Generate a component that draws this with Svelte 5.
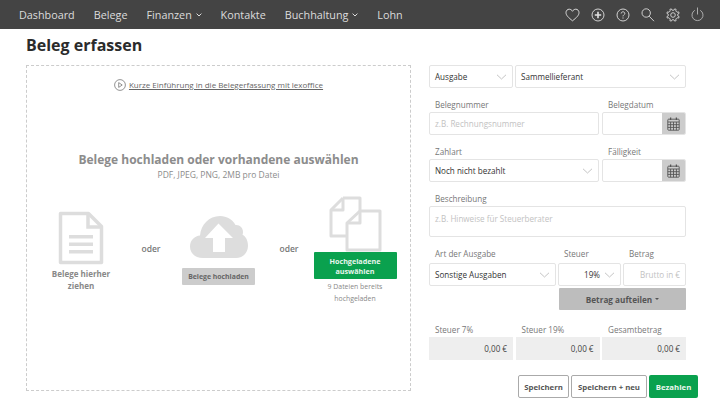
<script>
  const navItems = [
    { label: "Dashboard" },
    { label: "Belege" },
    { label: "Finanzen", caret: true },
    { label: "Kontakte" },
    { label: "Buchhaltung", caret: true },
    { label: "Lohn" }
  ];
  const totals = [
    { label: "Steuer 7%", value: "0,00 €" },
    { label: "Steuer 19%", value: "0,00 €" },
    { label: "Gesamtbetrag", value: "0,00 €" }
  ];

  // eight-toothed outline for the settings icon
  const gear = Array.from({ length: 8 }, (_, i) => {
    const a = (i * Math.PI) / 4 - Math.PI / 8;
    const pts = [[-0.2, 4.9], [-0.12, 6.4], [0.12, 6.4], [0.2, 4.9]];
    return pts
      .map(([d, r]) => `${(7 + r * Math.cos(a + d)).toFixed(2)},${(7 + r * Math.sin(a + d)).toFixed(2)}`)
      .join(" ");
  }).join(" ");
</script>

{#snippet chevron()}
  <svg class="chev" width="11" height="6" viewBox="0 0 11 6"><path d="M1 .8l4.5 4.2L10 .8" fill="none" stroke="#c4c4c4" stroke-width="1"/></svg>
{/snippet}

{#snippet calendar()}
  <span class="cal">
    <svg width="13" height="14" viewBox="0 0 13 14" fill="none" stroke="#555" stroke-width=".9">
      <rect x=".8" y="2.2" width="11.4" height="11" rx=".8"/>
      <path d="M.8 5h11.4M.8 7.7h11.4M.8 10.4h11.4M3.6 5v8.2M6.5 5v8.2M9.4 5v8.2"/>
      <path d="M3.6.5v2.6M9.4.5v2.6" stroke-width="1.3"/>
    </svg>
  </span>
{/snippet}

<header class="nav">
  <nav class="links">
    {#each navItems as item}
      <span class="link">
        {item.label}
        {#if item.caret}
          <svg width="6" height="4" viewBox="0 0 6 4"><path d="M.6.6L3 3l2.4-2.4" fill="none" stroke="#ddd" stroke-width="1"/></svg>
        {/if}
      </span>
    {/each}
  </nav>
  <div class="icons">
    <svg width="15" height="14" viewBox="0 0 15 14" fill="none" stroke="#e8e8e8" stroke-width=".9"><path d="M7.5 12.8C3.5 9.6 1 7.4 1 4.6 1 2.600 2.500 1.200 4.200 1.200c1.400 0 2.600.8 3.300 2.100.7-1.300 1.900-2.100 3.300-2.100 1.700 0 3.200 1.400 3.200 3.400 0 2.800-2.500 5-6.500 8.200z"/></svg>
    <svg width="14" height="14" viewBox="0 0 14 14" fill="none" stroke="#e0e0e0"><circle cx="7" cy="7" r="6" stroke-width=".9"/><path d="M7 3.800v6.400M3.800 7h6.400" stroke-width="1.600"/></svg>
    <svg width="14" height="14" viewBox="0 0 14 14" fill="none" stroke="#e0e0e0" stroke-width=".9"><circle cx="7" cy="7" r="6"/><path d="M5.200 5.500c0-1 .8-1.700 1.800-1.700s1.800.7 1.800 1.600c0 1.400-1.800 1.400-1.800 3"/><path d="M7 9.400v1.200"/></svg>
    <svg width="14" height="14" viewBox="0 0 14 14" fill="none" stroke="#dcdcdc" stroke-width=".9"><circle cx="5.200" cy="5" r="4.200"/><path d="M8.200 8.200l4.800 5"/></svg>
    <svg width="14" height="14" viewBox="0 0 14 14" fill="none" stroke="#d8d8d8" stroke-width=".9"><circle cx="7" cy="7" r="2.300"/><polygon points={gear} stroke-linejoin="round"/></svg>
    <svg width="13" height="15" viewBox="0 0 13 15" fill="none" stroke="#b8b8b8" stroke-width=".9"><path d="M6.500 .5v7"/><path d="M3.800 3.300a5.500 5.500 0 1 0 5.400 0"/></svg>
  </div>
</header>

<main class="page">
  <h1>Beleg erfassen</h1>
  <div class="columns">
    <section class="drop">
      <div class="intro">
        <svg width="12" height="12" viewBox="0 0 12 12" fill="none" stroke="#777" stroke-width=".8"><circle cx="6" cy="6" r="5.400"/><path d="M4.700 3.600L8.200 6 4.700 8.400z"/></svg>
        <span>Kurze Einführung in die Belegerfassung mit lexoffice</span>
      </div>
      <h2>Belege hochladen oder vorhandene auswählen</h2>
      <p class="formats">PDF, JPEG, PNG, 2MB pro Datei</p>
      <div class="options">
        <div class="opt first">
          <svg width="46" height="54" viewBox="0 0 46 54">
            <path d="M2.500 2.500h28l13 13v36h-41z" fill="none" stroke="#ddd" stroke-width="3.500" stroke-linejoin="round"/>
            <path d="M30 3v13h13" fill="none" stroke="#ddd" stroke-width="3.500"/>
            <path d="M11 24h24v3.500H11zM11 31.500h24V35H11zM11 39h24v3.500H11z" fill="#ddd"/>
          </svg>
          <strong>Belege hierher<br />ziehen</strong>
        </div>
        <span class="or">oder</span>
        <div class="opt second">
          <svg width="58" height="43" viewBox="0 0 58 43">
            <path d="M13 42C5 42 0 37 0 30.500 0 24 5 20 10 19.500 11 8.500 19 0 30 0c7 0 12.500 3.500 15.500 9 4-.5 7.500 2.500 7.500 7 0 1-.2 2-.5 2.800C56 20.500 58 25 58 30c0 7-5.500 12-12 12z" fill="#ddd"/>
            <path d="M28.500 7.500L43 22h-8v14H23V22h-8z" fill="#fff"/>
          </svg>
          <span class="btn-grey">Belege hochladen</span>
        </div>
        <span class="or">oder</span>
        <div class="opt third">
          <svg width="53" height="56" viewBox="0 0 53 56" fill="none" stroke="#ddd" stroke-width="3" stroke-linejoin="round">
            <path d="M14 2h17v17M14 2L2 14v26h15"/>
            <path d="M2 14h12V2"/>
            <path d="M31 15h20v39H24.500 18V27z" fill="#fff"/>
            <path d="M18 27h13V15"/>
          </svg>
          <span class="btn-green">Hochgeladene<br />auswählen</span>
          <small>9 Dateien bereits<br />hochgeladen</small>
        </div>
      </div>
    </section>

    <section class="form">
      <div class="row r-type">
        <div class="field select"><span>Ausgabe</span>{@render chevron()}</div>
        <div class="field select"><span>Sammellieferant</span>{@render chevron()}</div>
      </div>

      <div class="row r-two gap-top">
        <div>
          <span class="label">Belegnummer</span>
          <div class="field ph">z.B. Rechnungsnummer</div>
        </div>
        <div>
          <span class="label">Belegdatum</span>
          <div class="field date">{@render calendar()}</div>
        </div>
      </div>

      <div class="row r-two gap-top">
        <div>
          <span class="label">Zahlart</span>
          <div class="field select"><span>Noch nicht bezahlt</span>{@render chevron()}</div>
        </div>
        <div>
          <span class="label">Fälligkeit</span>
          <div class="field date">{@render calendar()}</div>
        </div>
      </div>

      <div class="gap-top">
        <span class="label">Beschreibung</span>
        <div class="field ph area">z.B. Hinweise für Steuerberater</div>
      </div>

      <div class="row r-tax gap-top tall">
        <div>
          <span class="label">Art der Ausgabe</span>
          <div class="field select"><span>Sonstige Ausgaben</span>{@render chevron()}</div>
        </div>
        <div>
          <span class="label">Steuer</span>
          <div class="field select right"><span>19%</span>{@render chevron()}</div>
        </div>
        <div>
          <span class="label">Betrag</span>
          <div class="field ph amount">Brutto in €</div>
        </div>
      </div>
      <div class="split">Betrag aufteilen <i></i></div>

      <div class="row r-totals">
        {#each totals as t}
          <div>
            <span class="label">{t.label}</span>
            <div class="total">{t.value}</div>
          </div>
        {/each}
      </div>

      <div class="actions">
        <button class="outline">Speichern</button>
        <button class="outline">Speichern + neu</button>
        <button class="primary">Bezahlen</button>
      </div>
    </section>
  </div>
</main>

<style>
  :global(body) {
    margin: 0;
    background: #fff;
    font-family: "Open Sans", "Liberation Sans", sans-serif;
    overflow: hidden;
  }

  .nav {
    height: 29px;
    background: #444;
    display: flex;
    align-items: center;
    justify-content: space-between;
    padding: 0 16px 0 19px;
    box-sizing: border-box;
    color: #ddd;
    font-size: 10.8px;
  }

  .links {
    display: flex;
    gap: 19px;
  }

  .link svg {
    margin-left: 1px;
    vertical-align: 2px;
  }

  .icons {
    display: flex;
    align-items: center;
    gap: 11px;
  }

  .page {
    padding: 0 22px 0 26px;
  }

  h1 {
    margin: 5px 0 9px;
    font-size: 16px;
    line-height: 22px;
    font-weight: 700;
    color: #2b2b2b;
  }

  .columns {
    display: flex;
    gap: 18px;
    align-items: flex-start;
  }

  .drop {
    width: 385px;
    height: 326px;
    box-sizing: border-box;
    border: 1px dashed #ccc;
    text-align: center;
    padding-top: 12px;
  }

  .intro {
    display: flex;
    align-items: center;
    justify-content: center;
    gap: 3px;
    font-size: 8px;
    color: #666;
    line-height: 14px;
  }

  .intro span {
    text-decoration: underline;
    text-underline-offset: 1px;
  }

  h2 {
    margin: 59px 0 0;
    font-size: 12px;
    line-height: 18px;
    font-weight: 700;
    color: #8c8c8c;
  }

  .formats {
    margin: -1px 0 0;
    font-size: 8.5px;
    line-height: 14px;
    color: #8c8c8c;
  }

  .options {
    display: flex;
    align-items: flex-start;
    margin-top: 14px;
    color: #888;
  }

  .opt {
    display: flex;
    flex-direction: column;
    align-items: center;
  }

  .first {
    width: 80px;
    margin: 15px 0 0 14px;
    gap: 3px;
  }

  .first strong {
    font-size: 8px;
    line-height: 12px;
  }

  .or {
    font-size: 8.5px;
    font-weight: 600;
    width: 38px;
    margin-top: 47px;
    margin-left: 11px;
    color: #777;
  }

  .second {
    width: 81px;
    margin: 20px 0 0 8px;
  }

  .btn-grey {
    margin-top: 9px;
    width: 73px;
    height: 17px;
    line-height: 17px;
    background: #ccc;
    border-radius: 1px;
    font-size: 6.9px;
    font-weight: 700;
    color: #666;
  }

  .third {
    width: 84px;
    margin-left: 5px;
  }

  .btn-green {
    width: 83px;
    box-sizing: border-box;
    margin-top: 0;
    padding: 3.5px 0;
    background: #0aa14e;
    border-radius: 1px;
    color: #eaf6ee;
    font-size: 7.2px;
    line-height: 10px;
    font-weight: 700;
  }

  small {
    margin-top: 2px;
    font-size: 6.9px;
    line-height: 12px;
    color: #888;
  }

  .form {
    width: 257px;
    flex: none;
    position: relative;
  }

  .row {
    display: grid;
    gap: 3px;
  }

  .r-type {
    grid-template-columns: 84px 1fr;
    gap: 2px;
  }

  .r-two {
    grid-template-columns: 170px 1fr;
  }

  .r-tax {
    grid-template-columns: 127px 63px 1fr;
    gap: 2px;
  }

  .r-totals {
    grid-template-columns: repeat(3, 84px);
    gap: 2.5px;
    margin-top: 13px;
  }

  .gap-top {
    margin-top: 10px;
  }

  .tall .label {
    margin-bottom: 2px;
  }

  .label {
    display: block;
    font-size: 8.1px;
    line-height: 14px;
    padding-left: 6px;
    color: #777;
  }

  .field {
    height: 23px;
    box-sizing: border-box;
    border: 1px solid #e4e4e4;
    border-radius: 2px;
    display: flex;
    align-items: center;
    justify-content: space-between;
    padding: 0 5px;
    font-size: 8.1px;
    color: #333;
    background: #fff;
  }

  .select span {
    flex: 1;
  }

  .select {
    gap: 4px;
  }

  .right span {
    text-align: right;
  }

  .chev {
    flex: none;
    margin-top: 1px;
  }

  .ph {
    color: #c2c2c2;
  }

  .area {
    height: 31px;
    align-items: flex-start;
    padding-top: 6px;
  }

  .amount {
    justify-content: flex-end;
  }

  .date {
    padding: 0;
    justify-content: flex-end;
    overflow: hidden;
  }

  .cal {
    width: 23px;
    height: 100%;
    background: #ccc;
    display: flex;
    align-items: center;
    justify-content: center;
  }

  .split {
    margin: 2px 0 0 130px;
    height: 22px;
    background: #bdbdbd;
    border-radius: 1px;
    font-size: 8.2px;
    font-weight: 700;
    color: #555;
    display: flex;
    align-items: center;
    justify-content: center;
    gap: 3px;
  }

  .split i {
    border: 2px solid transparent;
    border-top-color: #555;
    margin-top: 2px;
  }

  .total {
    height: 23px;
    background: #eee;
    font-size: 8.1px;
    line-height: 23px;
    text-align: right;
    padding-right: 6px;
    color: #444;
  }

  .actions {
    display: flex;
    justify-content: flex-end;
    gap: 2px;
    margin: 15px -12px 0 0;
  }

  button {
    height: 23px;
    padding: 0;
    border-radius: 2px;
    font-family: inherit;
    font-size: 7.8px;
    font-weight: 700;
  }

  .outline {
    border: 1px solid #aaa;
    background: #fff;
    color: #555;
  }

  .outline:first-child {
    width: 51px;
  }

  .outline:nth-child(2) {
    width: 76px;
  }

  .primary {
    width: 49px;
    border: none;
    background: #0aa14e;
    color: #eaf6ee;
  }
</style>
